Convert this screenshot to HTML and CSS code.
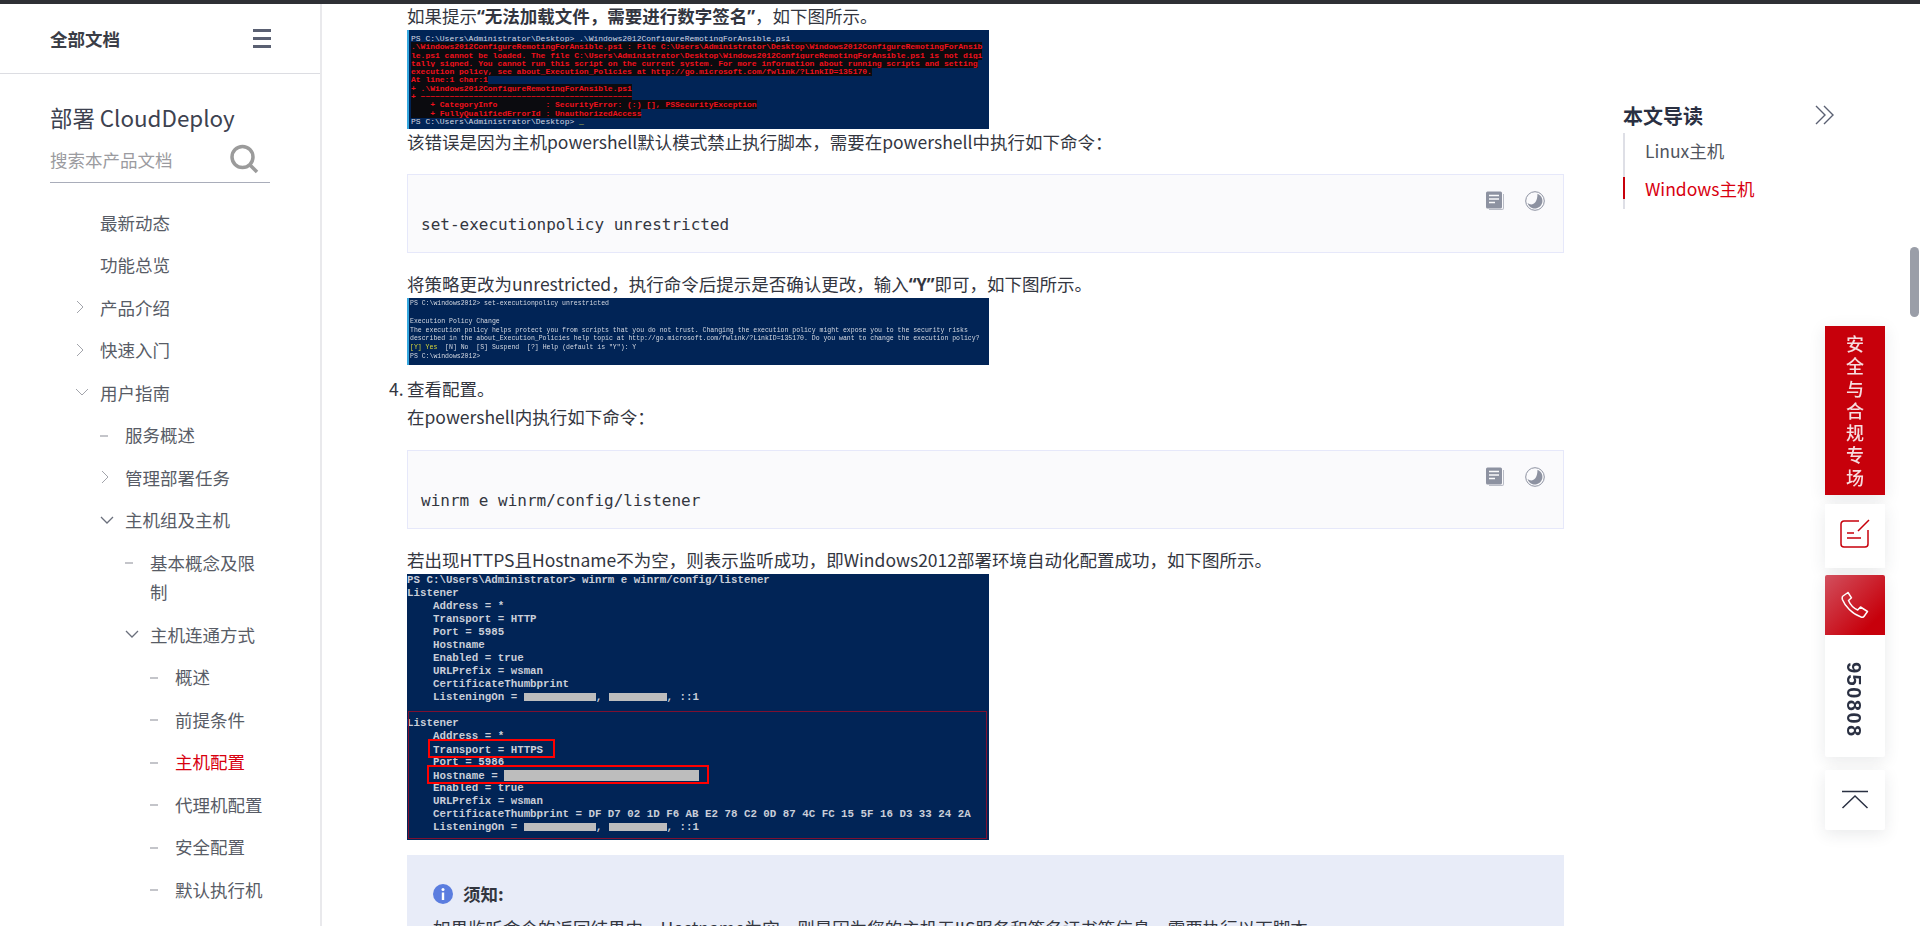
FILE: index.html
```html
<!DOCTYPE html>
<html lang="zh-CN">
<head>
<meta charset="utf-8">
<title>主机配置 - 部署 CloudDeploy</title>
<link rel="stylesheet" href="styles.css">
</head>
<body>
<div class="topbar"></div>
<div class="page">
  <nav class="sidebar">
    <header class="side-head">
      <strong>全部文档</strong>
      <span class="burger"><i></i><i></i><i></i></span>
    </header>
    <div class="side-body">
      <h2 class="product">部署 CloudDeploy</h2>
      <div class="search">
        <span>搜索本产品文档</span>
        <svg width="30" height="30" viewBox="0 0 30 30" fill="none" stroke="#9b9b9b"><circle cx="13.500" cy="13" r="10.500" stroke-width="3.500"/><path d="M21 21l7 7" stroke-width="3.500"/></svg>
      </div>
      <ul class="tree">
        <li class="row l1"><span class="slot"></span><span>最新动态</span></li>
        <li class="row l1"><span class="slot"></span><span>功能总览</span></li>
        <li class="row l1"><span class="slot"><svg class="chev" width="10" height="16" viewBox="0 0 10 16"><path d="M2 2l6 6-6 6"/></svg></span><span>产品介绍</span></li>
        <li class="row l1"><span class="slot"><svg class="chev" width="10" height="16" viewBox="0 0 10 16"><path d="M2 2l6 6-6 6"/></svg></span><span>快速入门</span></li>
        <li class="row l1"><span class="slot"><svg class="chev" width="14" height="10" viewBox="0 0 14 10"><path d="M1 2l6 6 6-6"/></svg></span><span>用户指南</span></li>
        <li class="row l2"><span class="slot"><i class="dash"></i></span><span>服务概述</span></li>
        <li class="row l2"><span class="slot"><svg class="chev" width="10" height="16" viewBox="0 0 10 16"><path d="M2 2l6 6-6 6"/></svg></span><span>管理部署任务</span></li>
        <li class="row l2"><span class="slot"><svg class="chev dark" width="14" height="10" viewBox="0 0 14 10"><path d="M1 2l6 6 6-6"/></svg></span><span>主机组及主机</span></li>
        <li class="row l3"><span class="slot"><i class="dash"></i></span><span>基本概念及限制</span></li>
        <li class="row l3"><span class="slot"><svg class="chev dark" width="14" height="10" viewBox="0 0 14 10"><path d="M1 2l6 6 6-6"/></svg></span><span>主机连通方式</span></li>
        <li class="row l4"><span class="slot"><i class="dash"></i></span><span>概述</span></li>
        <li class="row l4"><span class="slot"><i class="dash"></i></span><span>前提条件</span></li>
        <li class="row l4 active"><span class="slot"><i class="dash"></i></span><span>主机配置</span></li>
        <li class="row l4"><span class="slot"><i class="dash"></i></span><span>代理机配置</span></li>
        <li class="row l4"><span class="slot"><i class="dash"></i></span><span>安全配置</span></li>
        <li class="row l4"><span class="slot"><i class="dash"></i></span><span>默认执行机</span></li>
      </ul>
    </div>
  </nav>

  <main class="doc">
    <p class="first">如果提示<b><span class="q">“</span>无法加载文件，需要进行数字签名<span class="q">”</span></b>，如下图所示。</p>
    <div class="shot shot-a">
      <div>PS C:\Users\Administrator\Desktop&gt; .\Windows2012ConfigureRemotingForAnsible.ps1</div>
      <div><span class="err">.\Windows2012ConfigureRemotingForAnsible.ps1 : File C:\Users\Administrator\Desktop\Windows2012ConfigureRemotingForAnsib</span></div>
      <div><span class="err">le.ps1 cannot be loaded. The file C:\Users\Administrator\Desktop\Windows2012ConfigureRemotingForAnsible.ps1 is not digi</span></div>
      <div><span class="err">tally signed. You cannot run this script on the current system. For more information about running scripts and setting</span></div>
      <div><span class="err">execution policy, see about_Execution_Policies at http://go.microsoft.com/fwlink/?LinkID=135170.</span></div>
      <div><span class="err">At line:1 char:1</span></div>
      <div><span class="err">+ .\Windows2012ConfigureRemotingForAnsible.ps1</span></div>
      <div><span class="err">+ ~~~~~~~~~~~~~~~~~~~~~~~~~~~~~~~~~~~~~~~~~~~~</span></div>
      <div><span class="err">    + CategoryInfo          : SecurityError: (:) [], PSSecurityException</span></div>
      <div><span class="err">    + FullyQualifiedErrorId : UnauthorizedAccess</span></div>
      <div>PS C:\Users\Administrator\Desktop&gt; <span class="cursor">_</span></div>
    </div>
    <p class="tight">该错误是因为主机powershell默认模式禁止执行脚本，需要在powershell中执行如下命令：</p>
    <div class="code">
      <code>set-executionpolicy unrestricted</code>
      <span class="code-tools">
        <svg width="20" height="20" viewBox="0 0 20 20"><path d="M4 19h13a2 2 0 0 0 2-2V3h-1v14a1 1 0 0 1-1 1H4z" fill="#b9bcc6"/><rect x="1" y="0.500" width="16" height="17" rx="1.500" fill="#8d92a1"/><path d="M4 4.500h10M4 8h10M4 11.500h6" stroke="#fafafc" stroke-width="1.300"/></svg>
        <svg width="20" height="20" viewBox="0 0 20 20"><circle cx="10" cy="10" r="9.300" fill="none" stroke="#8d92a1"/><path d="M12.500 2.800a7.600 7.600 0 1 1-10 9.200c3.600 3 9.900 2 10-9.200z" fill="#8d92a1"/></svg>
      </span>
    </div>
    <p>将策略更改为unrestricted，执行命令后提示是否确认更改，输入<b><span class="q">“</span>Y<span class="q">”</span></b>即可，如下图所示。</p>
    <div class="shot shot-b">
      <div>PS C:\windows2012&gt; set-executionpolicy unrestricted</div>
      <div>&nbsp;</div>
      <div>Execution Policy Change</div>
      <div>The execution policy helps protect you from scripts that you do not trust. Changing the execution policy might expose you to the security risks</div>
      <div>described in the about_Execution_Policies help topic at http://go.microsoft.com/fwlink/?LinkID=135170. Do you want to change the execution policy?</div>
      <div><span class="yes">[Y] Yes</span>  [N] No  [S] Suspend  [?] Help (default is "Y"): Y</div>
      <div>PS C:\windows2012&gt;</div>
    </div>
    <ol class="steps" start="4">
      <li>
        <p class="step-title">查看配置。</p>
        <p>在powershell内执行如下命令：</p>
      </li>
    </ol>
    <div class="code">
      <code>winrm e winrm/config/listener</code>
      <span class="code-tools">
        <svg width="20" height="20" viewBox="0 0 20 20"><path d="M4 19h13a2 2 0 0 0 2-2V3h-1v14a1 1 0 0 1-1 1H4z" fill="#b9bcc6"/><rect x="1" y="0.500" width="16" height="17" rx="1.500" fill="#8d92a1"/><path d="M4 4.500h10M4 8h10M4 11.500h6" stroke="#fafafc" stroke-width="1.300"/></svg>
        <svg width="20" height="20" viewBox="0 0 20 20"><circle cx="10" cy="10" r="9.300" fill="none" stroke="#8d92a1"/><path d="M12.500 2.800a7.600 7.600 0 1 1-10 9.200c3.600 3 9.900 2 10-9.200z" fill="#8d92a1"/></svg>
      </span>
    </div>
    <p>若出现HTTPS且Hostname不为空，则表示监听成功，即Windows2012部署环境自动化配置成功，如下图所示。</p>
    <div class="shot shot-c">
      <div>PS C:\Users\Administrator&gt; winrm e winrm/config/listener</div>
      <div>Listener</div>
      <div>    Address = *</div>
      <div>    Transport = HTTP</div>
      <div>    Port = 5985</div>
      <div>    Hostname</div>
      <div>    Enabled = true</div>
      <div>    URLPrefix = wsman</div>
      <div>    CertificateThumbprint</div>
      <div>    ListeningOn = <i class="bar w72"></i>, <i class="bar w58"></i>, ::1</div>
      <div>&nbsp;</div>
      <div>Listener</div>
      <div>    Address = *</div>
      <div>   <span class="mark mark-t">Transport = HTTPS</span></div>
      <div>    Port = 5986</div>
      <div>   <span class="mark mark-h">Hostname = <i class="bar w195"></i></span></div>
      <div>    Enabled = true</div>
      <div>    URLPrefix = wsman</div>
      <div>    CertificateThumbprint = DF D7 02 1D F6 AB E2 78 C2 0D 87 4C FC 15 5F 16 D3 33 24 2A</div>
      <div>    ListeningOn = <i class="bar w72"></i>, <i class="bar w58"></i>, ::1</div>
      <span class="listener-box"></span>
    </div>
    <section class="notice">
      <h4><svg width="20" height="20" viewBox="0 0 20 20"><circle cx="10" cy="10" r="10" fill="#5b7ddf"/><circle cx="10" cy="5.500" r="1.500" fill="#fff"/><rect x="8.800" y="8.500" width="2.400" height="7.500" fill="#fff"/></svg>须知:</h4>
      <p>如果监听命令的返回结果中，Hostname为空，则是因为您的主机无IIS服务和签名证书等信息，需要执行以下脚本。</p>
    </section>
  </main>

  <aside class="toc">
    <div class="toc-head">
      <strong>本文导读</strong>
      <svg width="20" height="20" viewBox="0 0 20 20" fill="none" stroke="#5a6072" stroke-width="1.400"><path d="M1 1l9 9-9 9M9 1l9 9-9 9"/></svg>
    </div>
    <ul class="toc-list">
      <li>Linux主机</li>
      <li class="on">Windows主机</li>
    </ul>
  </aside>
</div>

<div class="float">
  <a class="float-red">安全与合规专场</a>
  <a class="float-card">
    <svg width="30" height="30" viewBox="0 0 30 30" fill="none" stroke="#c7000b" stroke-width="1.500"><path d="M19 3H4a3 3 0 0 0-3 3v20a3 3 0 0 0 3 3h21a3 3 0 0 0 3-3V12"/><path d="M18 13L29 2M7 15h7M7 20h14"/></svg>
  </a>
  <div class="float-phone">
    <span class="phone-top">
      <svg width="28" height="28" viewBox="0 0 28 28" fill="none" stroke="#fff" stroke-width="1.500" stroke-linejoin="round"><path d="M7 1.500L2 5c-1 .8-1 2-.6 3.500C4 15 11 23 20 26c1.500.5 2.700 0 3.300-1l3.200-4.500-7-4.500-2.800 3C12 17 9 13 7.500 9.500l3-2.700z"/></svg>
    </span>
    <span class="phone-num">950808</span>
  </div>
  <a class="float-card float-top">
    <svg width="28" height="20" viewBox="0 0 28 20" fill="none" stroke="#2a3042" stroke-width="1.500"><path d="M1 1.500h26M1.500 18L14 6l12.500 12"/></svg>
  </a>
</div>
<div class="scroll-thumb"></div>
</body>
</html>
```
FILE: styles.css
```css
* { box-sizing: border-box; }
html, body { margin: 0; height: 926px; overflow: hidden; background: #fff; }
body {
  font-family: "Noto Sans CJK SC", "Noto Sans", sans-serif;
  font-size: 17.5px;
  color: #40444f;
}
ul, ol { list-style: none; margin: 0; padding: 0; }
p, h2, h4 { margin: 0; }

.topbar { height: 4px; background: #2e3035; position: relative; z-index: 2; }
.page { display: flex; height: 922px; overflow: hidden; }

/* Sidebar */
.sidebar { flex: none; width: 322px; height: 922px; border-right: 2px solid #e9e9ec; overflow: hidden; }
.side-head {
  height: 70px;
  padding: 0 50px;
  display: flex;
  align-items: center;
  justify-content: space-between;
  border-bottom: 1px solid #dcdde2;
  color: #3a3d46;
}
.side-head strong { font-weight: 700; }
.burger { display: flex; flex-direction: column; gap: 5px; width: 18px; margin-right: -1px; }
.burger i { display: block; height: 3px; background: #5a6072; }
.side-body { padding: 0 50px; }
.product { font-size: 22.400px; line-height: 30px; font-weight: 400; color: #3d4250; padding-top: 28px; }
.search {
  height: 47px;
  margin-top: 4px;
  display: flex;
  align-items: center;
  justify-content: space-between;
  border-bottom: 1px solid #a9adba;
  color: #9b9ba0;
}
.search svg { margin-right: 11px; }
.tree { margin-top: 18px; width: 222px; }
.row { display: flex; padding: 6.500px 0; line-height: 29.500px; color: #585c66; }
.l1 { margin-left: 25px; }
.l2 { margin-left: 50px; }
.l3 { margin-left: 75px; }
.l4 { margin-left: 100px; }
.slot { flex: none; width: 25px; display: flex; align-items: center; height: 29.500px; }
.chev { fill: none; stroke: #a2a4ab; stroke-width: 1; }
.chev.dark { stroke: #6a6f7c; stroke-width: 1.300; }
.dash { display: block; width: 8px; height: 2px; background: #c4c5ca; margin-top: 2px; }
.active { color: #d8000f; }

/* Document */
.doc { flex: none; width: 1157px; margin-left: 85px; margin-top: -2px; height: 924px; color: #33363f; line-height: 28px; }
.doc b { font-weight: 700; }
.q { font-family: "Noto Sans", sans-serif; }
.tight { line-height: 26px; }
.shot {
  width: 582px;
  background: #012456;
  border-left: 2px solid #36a8e0;
  font-family: "Liberation Mono", monospace;
  overflow: hidden;
  color: #d5d9e2;
}
.shot div { white-space: pre; }
.shot-a { height: 99px; padding: 5px 0 0 2px; font-size: 8px; line-height: 8.300px; }
.err { background: #0b0b0f; color: #f0101c; font-weight: 700; }
.cursor { color: #e8e24a; }
.shot-b { height: 67px; padding: 2px 0 0 1px; font-size: 6.500px; line-height: 8.600px; filter: blur(.3px); }
.shot-b div:first-child { margin-bottom: 1px; }
.yes { color: #d9d93a; }
.shot-c { position: relative; height: 266px; border-left: 0; font-size: 10.800px; line-height: 13px; font-weight: 700; color: #c9ced9; }
.bar { display: inline-block; height: 8px; background: #bdbdbd; vertical-align: -1px; }
.w72 { width: 72px; }
.w58 { width: 58px; }
.w195 { width: 195px; height: 11px; vertical-align: -2px; }
.mark {
  position: relative;
  z-index: 1;
  display: inline-block;
  vertical-align: top;
  height: 19px;
  line-height: 18px;
  margin-top: -4px;
  margin-bottom: -2px;
  background: #012456;
  border: 2px solid #f00;
}
.mark-t { width: 127px; margin-left: 1.500px; padding-left: 3px; }
.mark-h { width: 282px; margin-left: .5px; padding-left: 4px; }
.listener-box { position: absolute; left: 1px; top: 137px; width: 579px; height: 128px; border: 1px solid #7d1030; }

.code {
  position: relative;
  height: 79px;
  margin: 19px 0 17px;
  padding: 32px 13px 0;
  background: #fafafc;
  border: 1px solid #e6e8fa;
  font-family: "DejaVu Sans Mono", monospace;
  font-size: 16px;
  line-height: 36px;
  color: #33363f;
}
.code code { font-family: inherit; }
.code-tools { position: absolute; top: 16px; right: 18px; display: flex; gap: 20px; }

.steps li { position: relative; margin-top: 10px; }
.steps li::before { content: "4."; position: absolute; left: -18px; top: 0; }

.notice { margin-top: 15px; height: 80px; padding: 28px 26px 0; background: #e8ecf8; }
.notice h4 { display: flex; align-items: center; gap: 10px; font-size: 17.500px; line-height: 22px; font-weight: 700; margin-bottom: 9px; }

/* TOC */
.toc { flex: none; width: 215px; margin-left: 59px; padding-top: 97px; }
.toc-head { display: flex; align-items: center; justify-content: space-between; height: 28px; width: 212px; font-size: 20px; color: #2a3042; }
.toc-head strong { font-weight: 700; }
.toc-list { margin-top: 4px; border-left: 2px solid #dedfe6; padding: 0; }
.toc-list li { position: relative; padding-left: 20px; height: 38px; line-height: 36px; color: #50545e; }
.toc-list li.on { color: #d8000f; }
.toc-list li.on::before { content: ""; position: absolute; left: -2px; top: 6px; width: 2px; height: 22px; background: #c7000b; }

/* Floating rail */
.float { position: fixed; left: 1825px; top: 326px; width: 60px; display: flex; flex-direction: column; }
.float a, .float-phone { display: block; box-shadow: 0 4px 16px rgba(40, 45, 60, .1); }
.float-red {
  height: 169px;
  padding: 6px 20px 0;
  background: #c7000b;
  color: #f6dcdf;
  font-size: 18px;
  font-weight: 500;
  line-height: 22.300px;
  text-align: center;
}
.float-card { margin-top: 9px; height: 64px; background: #fff; padding: 14px 15px 0; }
.float-card svg { display: block; }
.float-phone { margin-top: 7px; height: 182px; background: #fff; border-radius: 2px; }
.phone-top {
  height: 60px;
  display: flex;
  align-items: center;
  justify-content: center;
  background: linear-gradient(135deg, #d2505e, #c7000b 80%);
  border-radius: 2px 2px 0 0;
}
.phone-num {
  display: block;
  margin-top: 27px;
  writing-mode: vertical-rl;
  margin-left: 18px;
  font-family: "Liberation Sans", sans-serif;
  font-size: 20px;
  font-weight: 700;
  letter-spacing: 1.500px;
  line-height: 22px;
  color: #2a3042;
}
.float-top { margin-top: 13px; height: 60px; padding: 20px 16px 0; border-radius: 2px; }

.scroll-thumb { position: fixed; left: 1910px; top: 247px; width: 9px; height: 70px; border-radius: 5px; background: #9a9ea8; }
```
